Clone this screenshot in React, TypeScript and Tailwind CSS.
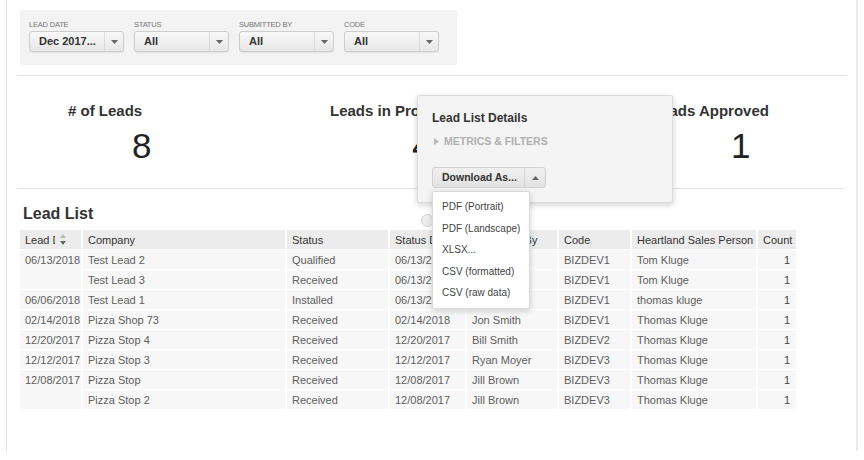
import React from "react";

const filters = [
  { label: "Lead Date", value: "Dec 2017..." },
  { label: "Status", value: "All" },
  { label: "Submitted By", value: "All" },
  { label: "Code", value: "All" },
];

type Row = {
  date?: string;
  span?: number;
  company: string;
  status: string;
  statusDate: string;
  by: string;
  code: string;
  person: string;
};

const rows: Row[] = [
  { date: "06/13/2018", span: 2, company: "Test Lead 2", status: "Qualified", statusDate: "06/13/2018", by: "Jon Smith", code: "BIZDEV1", person: "Tom Kluge" },
  { company: "Test Lead 3", status: "Received", statusDate: "06/13/2018", by: "Jon Smith", code: "BIZDEV1", person: "Tom Kluge" },
  { date: "06/06/2018", company: "Test Lead 1", status: "Installed", statusDate: "06/13/2018", by: "Jon Smith", code: "BIZDEV1", person: "thomas kluge" },
  { date: "02/14/2018", company: "Pizza Shop 73", status: "Received", statusDate: "02/14/2018", by: "Jon Smith", code: "BIZDEV1", person: "Thomas Kluge" },
  { date: "12/20/2017", company: "Pizza Stop 4", status: "Received", statusDate: "12/20/2017", by: "Bill Smith", code: "BIZDEV2", person: "Thomas Kluge" },
  { date: "12/12/2017", company: "Pizza Stop 3", status: "Received", statusDate: "12/12/2017", by: "Ryan Moyer", code: "BIZDEV3", person: "Thomas Kluge" },
  { date: "12/08/2017", span: 2, company: "Pizza Stop", status: "Received", statusDate: "12/08/2017", by: "Jill Brown", code: "BIZDEV3", person: "Thomas Kluge" },
  { company: "Pizza Stop 2", status: "Received", statusDate: "12/08/2017", by: "Jill Brown", code: "BIZDEV3", person: "Thomas Kluge" },
];

const cell = "h-[20px] pl-[5px] pr-[4px] border-b border-r-2 border-white bg-[#f7f7f7] whitespace-nowrap overflow-hidden";
const head = "h-[20px] pl-[5px] pr-[4px] border-b border-r-2 border-white bg-[#ececec] text-[#333] text-left font-normal whitespace-nowrap overflow-hidden";

function Caret({ up = false }: { up?: boolean }) {
  return (
    <svg width="7" height="4" viewBox="0 0 7 4" className="fill-[#666]">
      {up ? <path d="M0 4 L3.5 0 L7 4 Z" /> : <path d="M0 0 L7 0 L3.5 4 Z" />}
    </svg>
  );
}

function Select({ label, value }: { label: string; value: string }) {
  return (
    <div className="w-[95px]">
      <div className="h-[12px] text-[7.5px] leading-[12px] uppercase text-[#777] tracking-[-0.2px]">{label}</div>
      <div className="flex h-[21px] rounded-[3px] border border-[#cdcdcd] bg-gradient-to-b from-[#f8f8f8] to-[#e7e7e7] shadow-[0_1px_1px_rgba(0,0,0,0.06)]">
        <div className="flex-1 pl-[9px] text-[11px] font-bold leading-[19px] text-[#333]">{value}</div>
        <div className="flex w-[19px] items-center justify-center border-l border-[#dadada]">
          <Caret />
        </div>
      </div>
    </div>
  );
}

export default function App() {
  return (
    <div className="relative h-[460px] w-[864px] overflow-hidden bg-white font-['Liberation_Sans',Arial,sans-serif]">
      <div className="ml-[6px] h-[451px] w-[852px] border-l border-r-2 border-l-[#e4e4e4] border-r-[#ebebeb] pt-[10px]">
        {/* filters */}
        <div className="ml-[13px] flex h-[55px] w-[437px] gap-[10px] bg-[#f3f3f3] pl-[9px] pt-[9px]">
          {filters.map((f) => (
            <Select key={f.label} label={f.label} value={f.value} />
          ))}
        </div>

        <div className="ml-[10px] mr-[9px] mt-[10px] h-px bg-[#e2e2e2]" />

        {/* metrics */}
        <div className="flex h-[112px] pl-[10px] pt-[26px] text-[#333]">
          <div className="w-[277px]">
            <div className="pl-[51px] text-[15px] font-bold leading-[18px]">&#35; of Leads</div>
            <div className="mt-[6px] pl-[115px] text-[35px] leading-[40px] text-[#222]">8</div>
          </div>
          <div className="w-[277px]">
            <div className="pl-[36px] text-[15px] font-bold leading-[18px]">Leads in Process</div>
            <div className="mt-[6px] pl-[118px] text-[35px] leading-[40px] text-[#222]">4</div>
          </div>
          <div className="w-[276px]">
            <div className="pl-[81px] text-[15px] font-bold leading-[18px]">Leads Approved</div>
            <div className="mt-[6px] pl-[160px] text-[35px] leading-[40px] text-[#222]">1</div>
          </div>
        </div>

        <div className="ml-[10px] mr-[11px] h-px bg-[#e2e2e2]" />

        {/* lead list */}
        <div className="ml-[16px] mt-[15px] mb-[6px] text-[16px] font-bold leading-[20px] text-[#333]">Lead List</div>
        <table className="ml-[13px] w-[778px] table-fixed border-separate border-spacing-0 text-[11px] leading-[18px] text-[#5e5e5e]">
          <colgroup>
            <col className="w-[63px]" />
            <col className="w-[204px]" />
            <col className="w-[103px]" />
            <col className="w-[77px]" />
            <col className="w-[92px]" />
            <col className="w-[73px]" />
            <col className="w-[126px]" />
            <col className="w-[40px]" />
          </colgroup>
          <thead>
            <tr>
              <th className={head}>
                <div className="flex items-center">
                  <span className="w-[30px] shrink-0 overflow-hidden whitespace-nowrap">Lead Date</span>
                  <svg width="6" height="11" viewBox="0 0 6 11" className="ml-[5px] shrink-0">
                    <path d="M0 4 L3 0 L6 4 Z" fill="#bbb" />
                    <path d="M0 7 L6 7 L3 11 Z" fill="#666" />
                  </svg>
                </div>
              </th>
              <th className={head}>Company</th>
              <th className={head}>Status</th>
              <th className={head}>Status Date</th>
              <th className={head}>Submitted By</th>
              <th className={head}>Code</th>
              <th className={head}>Heartland Sales Person</th>
              <th className={head}>Count</th>
            </tr>
          </thead>
          <tbody>
            {rows.map((r, i) => (
              <tr key={i}>
                {r.date && (
                  <td rowSpan={r.span ?? 1} className={cell + " align-top pt-px"}>
                    {r.date}
                  </td>
                )}
                <td className={cell}>{r.company}</td>
                <td className={cell}>{r.status}</td>
                <td className={cell}>{r.statusDate}</td>
                <td className={cell}>{r.by}</td>
                <td className={cell}>{r.code}</td>
                <td className={cell}>{r.person}</td>
                <td className={cell + " text-right !pr-[6px] bg-[#f3f3f3] text-[#444]"}>1</td>
              </tr>
            ))}
          </tbody>
        </table>
      </div>

      {/* partially hidden round control */}
      <div className="absolute left-[421px] top-[214px] h-[13px] w-[13px] rounded-full border border-[#d4d4d4] bg-[#ececec]" />

      {/* details popover */}
      <div className="absolute left-[417px] top-[95px] h-[108px] w-[256px] rounded-[2px] border border-[#dcdcdc] bg-[#f4f4f4] pl-[14px] pt-[14px] shadow-[0_2px_6px_rgba(0,0,0,0.18)]">
        <div className="text-[12px] font-bold leading-[16px] text-[#333]">Lead List Details</div>
        <div className="mt-[7px] flex items-center text-[10.5px] font-bold leading-[16px] text-[#b0b0b0]">
          <svg width="5" height="7" viewBox="0 0 5 7" className="ml-[2px] mr-[5px]">
            <path d="M0 0 L5 3.5 L0 7 Z" fill="#bbb" />
          </svg>
          METRICS &amp; FILTERS
        </div>
        <div className="mt-[18px] flex h-[21px] w-[114px] rounded-[3px] border border-[#d0d0d0] bg-gradient-to-b from-[#f0f0f0] to-[#e2e2e2]">
          <div className="flex-1 pl-[9px] text-[10.5px] font-bold leading-[19px] text-[#333]">Download As...</div>
          <div className="flex w-[21px] items-center justify-center border-l border-[#d4d4d4]">
            <Caret up />
          </div>
        </div>
      </div>

      {/* download menu */}
      <div className="absolute left-[432px] top-[191px] w-[98px] rounded-[2px] border border-[#dadada] bg-white py-[4px] pl-[9px] text-[10px] leading-[21.5px] text-[#444] shadow-[0_2px_6px_rgba(0,0,0,0.18)]">
        <div>PDF (Portrait)</div>
        <div>PDF (Landscape)</div>
        <div>XLSX...</div>
        <div>CSV (formatted)</div>
        <div>CSV (raw data)</div>
      </div>
    </div>
  );
}
